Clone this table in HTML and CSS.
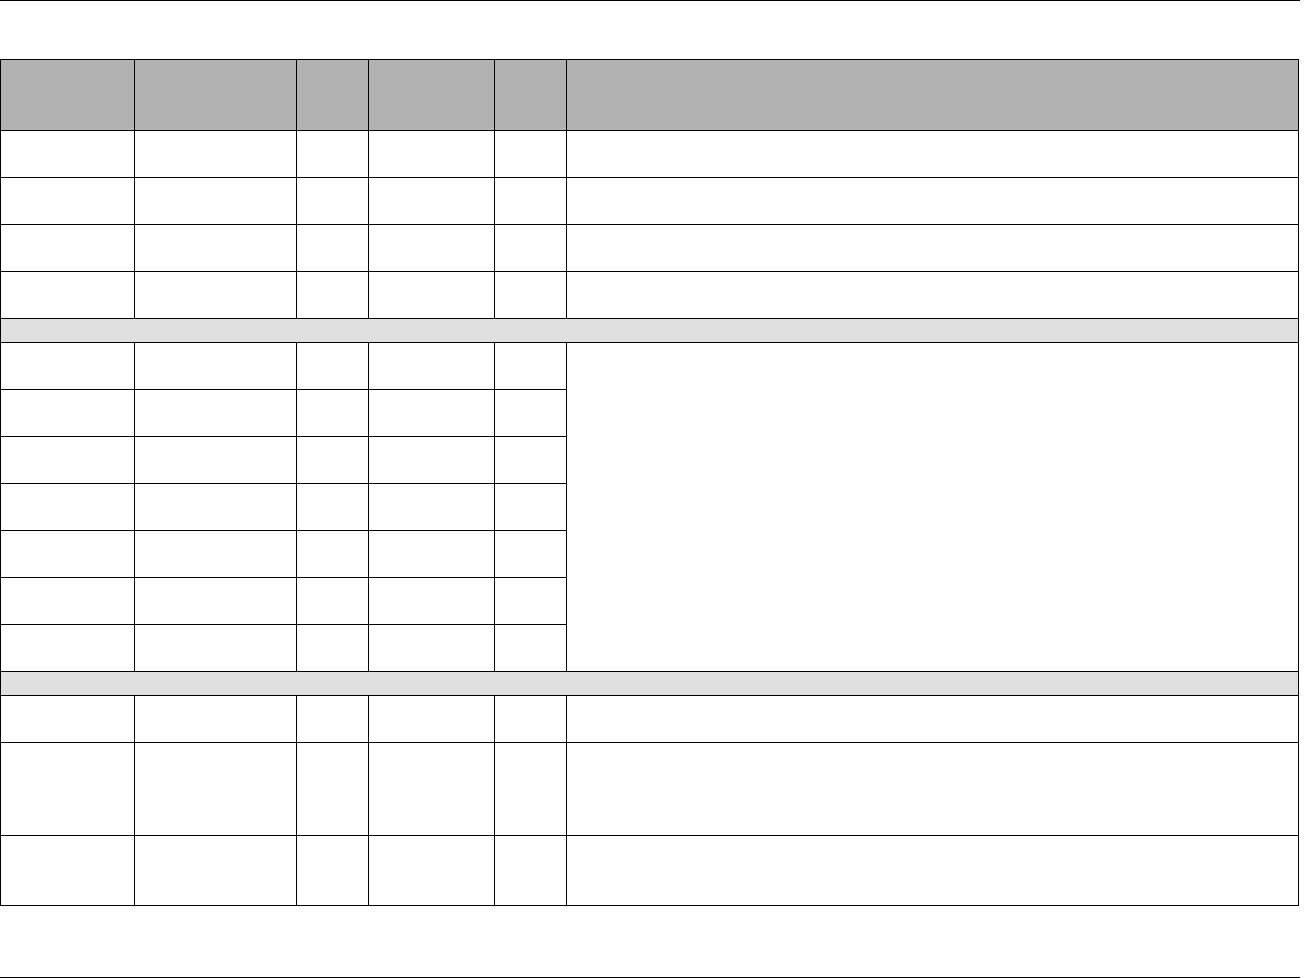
FILE: index.html
```html
<!DOCTYPE html>
<html lang="en">
<head>
<meta charset="utf-8">
<title>Table</title>
<link rel="stylesheet" href="styles.css">
</head>
<body>
<div class="page">
  <div class="rule"></div>
  <table class="grid">
    <colgroup>
      <col class="c1"><col class="c2"><col class="c3"><col class="c4"><col class="c5"><col class="c6">
    </colgroup>
    <thead>
      <tr class="head"><th></th><th></th><th></th><th></th><th></th><th></th></tr>
    </thead>
    <tbody>
      <tr class="row"><td></td><td></td><td></td><td></td><td></td><td></td></tr>
      <tr class="row"><td></td><td></td><td></td><td></td><td></td><td></td></tr>
      <tr class="row"><td></td><td></td><td></td><td></td><td></td><td></td></tr>
      <tr class="row"><td></td><td></td><td></td><td></td><td></td><td></td></tr>
      <tr class="section"><td colspan="6"></td></tr>
      <tr class="row"><td></td><td></td><td></td><td></td><td></td><td rowspan="7"></td></tr>
      <tr class="row"><td></td><td></td><td></td><td></td><td></td></tr>
      <tr class="row"><td></td><td></td><td></td><td></td><td></td></tr>
      <tr class="row"><td></td><td></td><td></td><td></td><td></td></tr>
      <tr class="row"><td></td><td></td><td></td><td></td><td></td></tr>
      <tr class="row"><td></td><td></td><td></td><td></td><td></td></tr>
      <tr class="row"><td></td><td></td><td></td><td></td><td></td></tr>
      <tr class="section"><td colspan="6"></td></tr>
      <tr class="row"><td></td><td></td><td></td><td></td><td></td><td></td></tr>
      <tr class="tall"><td></td><td></td><td></td><td></td><td></td><td></td></tr>
      <tr class="last"><td></td><td></td><td></td><td></td><td></td><td></td></tr>
    </tbody>
  </table>
  <div class="rule rule-bottom"></div>
</div>
</body>
</html>
```

FILE: styles.css
```css
html, body {
  margin: 0;
  padding: 0;
  background: #ffffff;
  font-family: "Liberation Sans", Arial, sans-serif;
}

.page {
  width: 1307px;
  height: 978px;
  display: flex;
  flex-direction: column;
}

.rule {
  width: 1300px;
  height: 1px;
  background: #000000;
  flex: none;
}

.rule-bottom {
  margin-top: 71px;
}

.grid {
  margin-top: 58px;
  border-collapse: collapse;
  table-layout: fixed;
  width: 1298px;
  flex: none;
}

.grid th,
.grid td {
  border: 1px solid #000000;
  padding: 0;
}

.c1 { width: 134px; }
.c2 { width: 162px; }
.c3 { width: 72px; }
.c4 { width: 126px; }
.c5 { width: 72px; }
.c6 { width: 732px; }

.head th {
  background: #b2b2b2;
  height: 70px;
}

.row td { height: 46px; }
.section td {
  height: 23px;
  background: #e0e0e0;
}
.tall td { height: 92px; }
.last td { height: 69px; }
```
